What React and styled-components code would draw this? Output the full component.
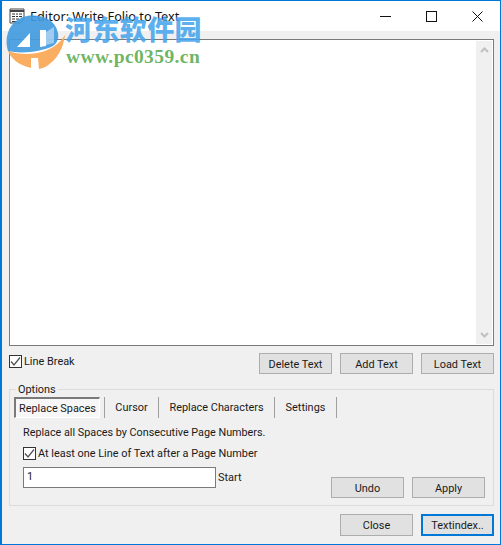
import React from "react";
import styled, { createGlobalStyle } from "styled-components";

const Global = createGlobalStyle`
  html, body { margin: 0; padding: 0; background: #f0f0f0; }
  * { box-sizing: border-box; }
`;

const Win = styled.div`
  position: relative;
  width: 501px;
  height: 545px;
  background: #f0f0f0;
  border: 1px solid #0078d7;
  border-left-width: 2px;
  font-family: Roboto, "Liberation Sans", sans-serif;
  font-size: 10.9px;
  color: #1a1a1a;
  overflow: hidden;
  display: flex;
  flex-direction: column;
`;

const TitleBar = styled.div`
  height: 30px;
  background: #fff;
  display: flex;
  align-items: center;
  flex: none;
`;

const TitleIcon = styled.svg`
  width: 16px;
  height: 16px;
  margin-left: 7px;
  margin-right: 5px;
`;

const TitleText = styled.div`
  flex: 1;
  font-family: "Noto Sans", sans-serif;
  font-size: 12.7px;
  color: #111;
`;

const WinBtn = styled.div`
  width: 46px;
  height: 30px;
  display: flex;
  align-items: center;
  justify-content: center;
`;

const Content = styled.div`
  flex: 1;
  display: flex;
  flex-direction: column;
  padding: 8px 6px 7px 7px;
`;

const EditorBox = styled.div`
  height: 307px;
  background: #fff;
  border: 1px solid #7a7a7a;
  display: flex;
  justify-content: flex-end;
`;

const ScrollTrack = styled.div`
  width: 16px;
  margin: 1px;
  background: #f0f0f0;
  display: flex;
  flex-direction: column;
  justify-content: space-between;
  align-items: center;
  padding: 6px 0;
`;

const ActionRow = styled.div`
  display: flex;
  align-items: flex-start;
  margin-top: 7px;
  height: 30px;
`;

const CheckRow = styled.label`
  display: flex;
  align-items: center;
  gap: 2px;
  height: 14px;
  margin-top: ${(p) => p.$top || 0}px;
  white-space: nowrap;
`;

const Box = styled.span`
  width: 13px;
  height: 13px;
  background: #fff;
  border: 1px solid #333;
  display: flex;
  align-items: center;
  justify-content: center;
  flex: none;
`;

const Spacer = styled.div`
  flex: 1;
`;

const Btn = styled.div`
  width: 73px;
  height: ${(p) => p.$h || 21}px;
  margin-left: 8px;
  padding-top: 1px;
  background: #e1e1e1;
  border: ${(p) => (p.$primary ? "2px solid #0078d7" : "1px solid #adadad")};
  display: flex;
  align-items: center;
  justify-content: center;
  white-space: nowrap;
`;

const Group = styled.fieldset`
  position: relative;
  margin: 6px 0 0;
  padding: 0;
  height: 117px;
  border: 1px solid #dcdcdc;
  display: block;
`;

const Legend = styled.div`
  position: absolute;
  top: -7px;
  left: 6px;
  padding: 0 2px;
  line-height: 14px;
  background: #f0f0f0;
`;

const GroupInner = styled.div`
  display: flex;
  flex-direction: column;
  padding: 7px 8px 0 4px;
  height: 100%;
`;

const Tabs = styled.div`
  display: flex;
  align-items: stretch;
  height: 21px;
`;

const Tab = styled.div`
  display: flex;
  align-items: center;
  justify-content: center;
  width: ${(p) => p.$w}px;
  white-space: nowrap;
  border-right: ${(p) => (p.$active ? "none" : "1px solid #a0a0a0")};
  ${(p) =>
    p.$active &&
    `
    background: #f7f7f7;
    border: 1px solid #fff;
    border-top: 2px solid #7a7a7a;
    border-left: 2px solid #7a7a7a;
    margin-right: 4px;
    padding-top: 1px;
  `}
`;

const Sep = styled.div`
  width: 1px;
  background: #a0a0a0;
`;

const Page = styled.div`
  display: flex;
  flex-direction: column;
  padding-left: 9px;
  flex: 1;
`;

const Info = styled.div`
  margin-top: 8px;
  line-height: 14px;
  font-size: 10.8px;
`;

const InputRow = styled.div`
  display: flex;
  align-items: flex-start;
  margin-top: 7px;
`;

const Input = styled.div`
  width: 193px;
  height: 21px;
  background: #fff;
  border: 1px solid #7a7a7a;
  padding-left: 3px;
  line-height: 18px;
`;

const StartLabel = styled.div`
  margin-left: 2px;
  line-height: 21px;
`;

const UndoBtns = styled.div`
  display: flex;
  margin-left: auto;
  margin-top: 10px;
`;

const FooterRow = styled.div`
  display: flex;
  justify-content: flex-end;
  margin-top: 8px;
`;

const Watermark = styled.div`
  position: absolute;
  left: 1px;
  top: 11px;
  width: 210px;
  height: 60px;
  pointer-events: none;
`;

const WmLogo = styled.svg`
  position: absolute;
  left: 2px;
  top: 3px;
  width: 60px;
  height: 54px;
`;

const WmCn = styled.div`
  position: absolute;
  left: 62px;
  top: 0;
  font-family: "Noto Sans CJK SC", sans-serif;
  font-weight: 900;
  font-size: 27px;
  line-height: 34px;
  letter-spacing: 0.4px;
  color: rgba(70, 165, 235, 0.88);
  white-space: nowrap;
`;

const WmUrl = styled.div`
  position: absolute;
  left: 63px;
  top: 34px;
  font-family: "Liberation Serif", serif;
  font-weight: 700;
  font-size: 19.5px;
  line-height: 22px;
  letter-spacing: 0.4px;
  color: rgba(95, 175, 85, 0.92);
  white-space: nowrap;
`;

const Check = () => (
  <svg width="11" height="11" viewBox="0 0 11 11">
    <path d="M1 5.5 L4 9 L10 1.5" fill="none" stroke="#555" strokeWidth="1.3" />
  </svg>
);

export default function App() {
  return (
    <>
      <Global />
      <Win>
        <TitleBar>
          <TitleIcon viewBox="0 0 16 16">
            <path d="M1 1H15V11L11 15H1Z" fill="#fff" stroke="#444" />
            <path d="M1 3H15" stroke="#444" strokeWidth="2" />
            <path d="M3 6h3M7 6h2M10 6h3M3 8.5h3M7 8.5h2M10 8.5h3M3 11h3M7 11h3M3 13.5h5" stroke="#333" />
          </TitleIcon>
          <TitleText>Editor: Write Folio to Text</TitleText>
          <WinBtn>
            <svg width="11" height="11" viewBox="0 0 11 11"><path d="M0 5.5H11" stroke="#111" /></svg>
          </WinBtn>
          <WinBtn>
            <svg width="11" height="11" viewBox="0 0 11 11"><rect x="0.5" y="0.5" width="10" height="10" fill="none" stroke="#111" /></svg>
          </WinBtn>
          <WinBtn>
            <svg width="11" height="11" viewBox="0 0 11 11"><path d="M0.5 0.5L10.5 10.5M10.5 0.5L0.5 10.5" stroke="#111" /></svg>
          </WinBtn>
        </TitleBar>
        <Content>
          <EditorBox>
            <ScrollTrack>
              <svg width="9" height="6" viewBox="0 0 9 6"><path d="M1 5L4.5 1.5L8 5" fill="none" stroke="#c0c0c0" strokeWidth="2" /></svg>
              <svg width="9" height="6" viewBox="0 0 9 6"><path d="M1 1L4.5 4.5L8 1" fill="none" stroke="#c0c0c0" strokeWidth="2" /></svg>
            </ScrollTrack>
          </EditorBox>
          <ActionRow>
            <CheckRow $top={1}>
              <Box><Check /></Box>
              Line Break
            </CheckRow>
            <Spacer />
            <Btn>Delete Text</Btn>
            <Btn>Add Text</Btn>
            <Btn>Load Text</Btn>
          </ActionRow>
          <Group>
            <Legend>Options</Legend>
            <GroupInner>
              <Tabs>
                <Tab $active $w={86}>Replace Spaces</Tab>
                <Sep />
                <Tab $w={54}>Cursor</Tab>
                <Tab $w={116}>Replace Characters</Tab>
                <Tab $w={62}>Settings</Tab>
              </Tabs>
              <Page>
                <Info>Replace all Spaces by Consecutive Page Numbers.</Info>
                <CheckRow $top={6}>
                  <Box><Check /></Box>
                  At least one Line of Text after a Page Number
                </CheckRow>
                <InputRow>
                  <Input>1</Input>
                  <StartLabel>Start</StartLabel>
                  <UndoBtns>
                    <Btn>Undo</Btn>
                    <Btn>Apply</Btn>
                  </UndoBtns>
                </InputRow>
              </Page>
            </GroupInner>
          </Group>
          <FooterRow>
            <Btn $h={22}>Close</Btn>
            <Btn $h={22} $primary>Textindex..</Btn>
          </FooterRow>
        </Content>
        <Watermark>
          <WmLogo viewBox="0 0 60 54">
            <path d="M3 36C-2 20 6 4 22 1C36 -1 50 4 53 18C54 24 52 28 48 31C36 37 16 39 3 36Z" fill="rgba(66,155,222,0.92)" />
            <path d="M12 32L25 18L25 32Z" fill="#fff" />
            <path d="M35 15L41 15L41 31L35 32Z" fill="#fff" />
            <path d="M41 17L49 12L49 28L41 30Z" fill="rgba(255,255,255,0.45)" />
            <path d="M60 20C58 38 46 52 34 54L33 43L26 43L26 53C14 50 6 44 3 36C12 39 22 40 32 38C44 36 54 30 60 20Z" fill="rgba(250,170,90,0.95)" />
          </WmLogo>
          <WmCn>河东软件园</WmCn>
          <WmUrl>www.pc0359.cn</WmUrl>
        </Watermark>
      </Win>
    </>
  );
}
